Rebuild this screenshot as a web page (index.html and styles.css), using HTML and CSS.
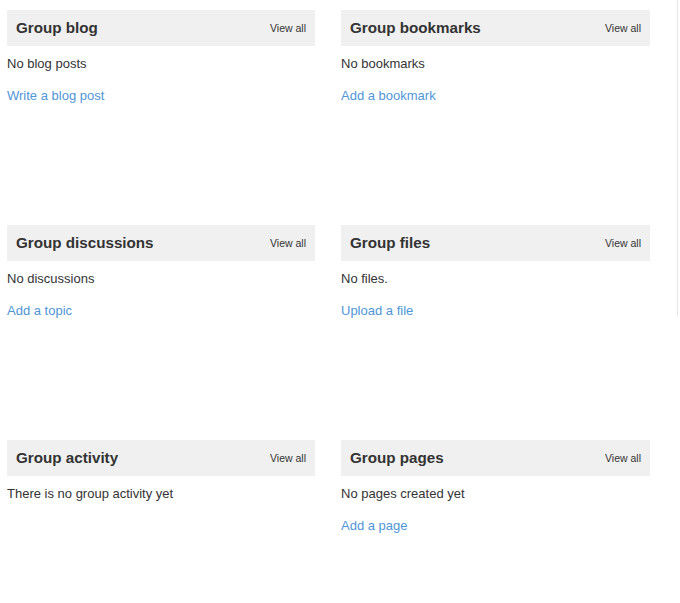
FILE: index.html
```html
<!DOCTYPE html>
<html>
<head>
<meta charset="utf-8">
<link rel="stylesheet" href="styles.css">
</head>
<body>
<div class="page">
  <div class="grid">
    <section class="panel">
      <div class="panel-head"><h3 class="panel-title">Group blog</h3><a class="view-all" href="#">View all</a></div>
      <div class="panel-body"><p class="empty">No blog posts</p><a class="action" href="#">Write a blog post</a></div>
    </section>
    <section class="panel">
      <div class="panel-head"><h3 class="panel-title">Group bookmarks</h3><a class="view-all" href="#">View all</a></div>
      <div class="panel-body"><p class="empty">No bookmarks</p><a class="action" href="#">Add a bookmark</a></div>
    </section>
    <section class="panel">
      <div class="panel-head"><h3 class="panel-title">Group discussions</h3><a class="view-all" href="#">View all</a></div>
      <div class="panel-body"><p class="empty">No discussions</p><a class="action" href="#">Add a topic</a></div>
    </section>
    <section class="panel">
      <div class="panel-head"><h3 class="panel-title">Group files</h3><a class="view-all" href="#">View all</a></div>
      <div class="panel-body"><p class="empty">No files.</p><a class="action" href="#">Upload a file</a></div>
    </section>
    <section class="panel">
      <div class="panel-head"><h3 class="panel-title">Group activity</h3><a class="view-all" href="#">View all</a></div>
      <div class="panel-body"><p class="empty">There is no group activity yet</p></div>
    </section>
    <section class="panel">
      <div class="panel-head"><h3 class="panel-title">Group pages</h3><a class="view-all" href="#">View all</a></div>
      <div class="panel-body"><p class="empty">No pages created yet</p><a class="action" href="#">Add a page</a></div>
    </section>
  </div>
  <div class="side-rule"></div>
</div>
</body>
</html>
```
FILE: styles.css
```css
html, body {
  margin: 0;
  padding: 0;
  background: #ffffff;
}
body {
  font-family: "Liberation Sans", Arial, sans-serif;
  color: #333333;
  font-size: 13px;
}
.page {
  display: flex;
  align-items: flex-start;
  width: 680px;
}
.grid {
  display: grid;
  grid-template-columns: 308px 309px;
  grid-template-rows: 215px 215px auto;
  column-gap: 26px;
  padding: 10px 0 0 7px;
}
.side-rule {
  width: 1px;
  height: 316px;
  background: #e6e6e6;
  margin-left: 27px;
}
.panel-head {
  display: flex;
  align-items: center;
  justify-content: space-between;
  height: 36px;
  padding: 0 9px;
  background: #f0f0f0;
}
.panel-title {
  margin: 0;
  font-size: 15.2px;
  font-weight: bold;
  color: #333333;
  line-height: 20px;
}
.view-all {
  font-size: 10.5px;
  color: #333333;
  text-decoration: none;
  line-height: 14px;
}
.panel-body {
  padding-top: 8px;
  line-height: 20px;
}
.empty {
  margin: 0 0 12px;
}
.action {
  color: #4f96d6;
  text-decoration: none;
}
```
